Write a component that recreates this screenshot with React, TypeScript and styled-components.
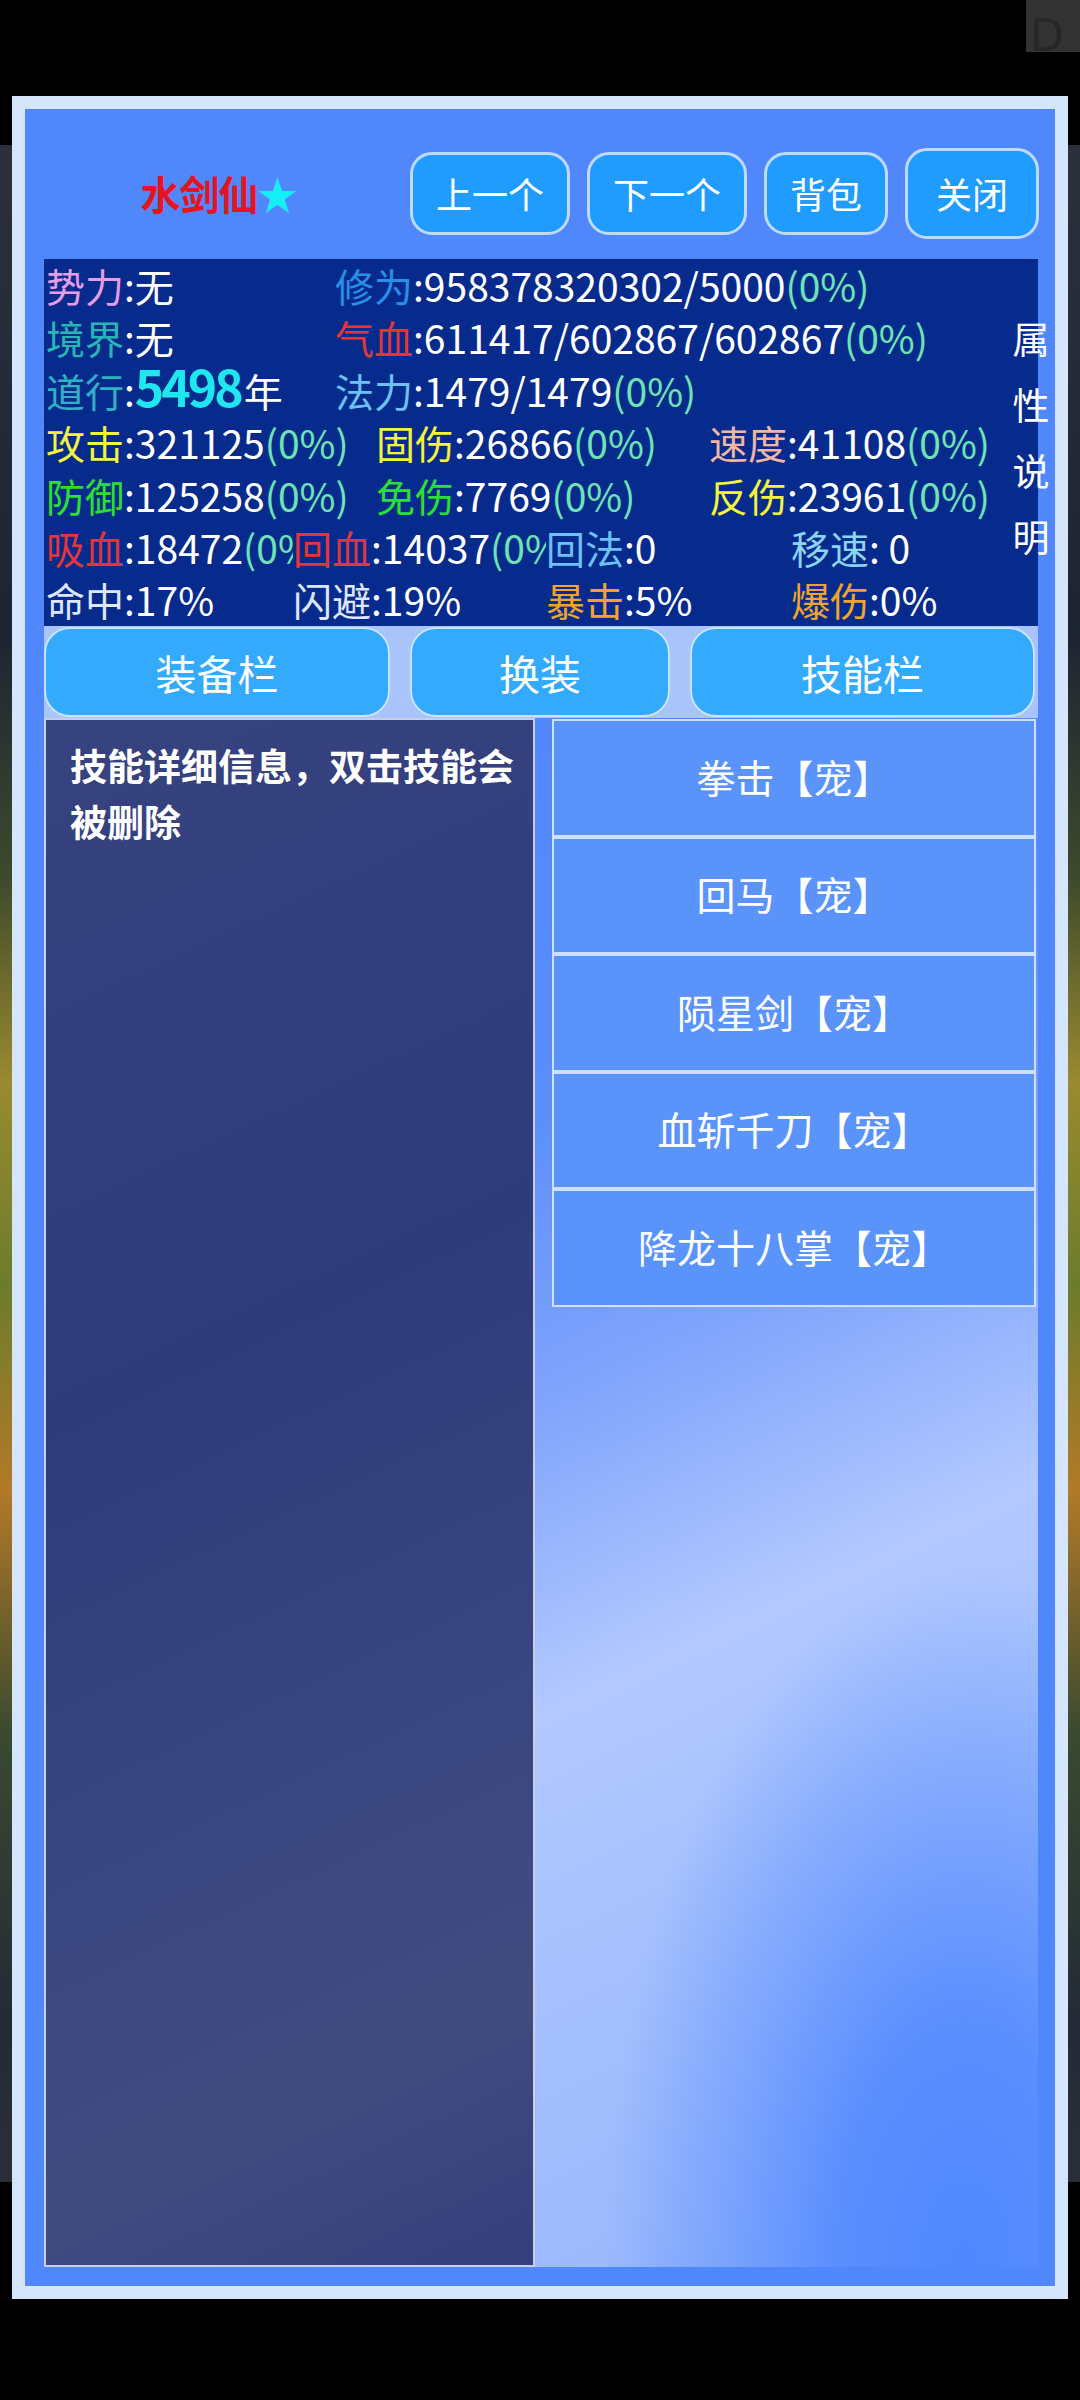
import React from 'react'
import styled, { createGlobalStyle } from 'styled-components'

const GlobalStyle = createGlobalStyle`
    html, body {
        margin: 0;
        padding: 0;
        background: #000;
    }
    * {
        box-sizing: border-box;
    }
`

const FONT = `"Noto Sans CJK SC", "Noto Sans", sans-serif`

const Screen = styled.div`
    width: 1080px;
    height: 2400px;
    overflow: hidden;
    font-family: ${FONT};
    /* game scene peeking out behind the dialog */
    background:
        linear-gradient(180deg, #2b303b 0%, #1d2433 24%, #3e4a2c 36%, #9a8a30 46%, #6c7c2c 56%, #b27a28 66%, #3a4a30 78%, #232a36 92%, #2a2e38 100%) 0 145px / 100% 2037px no-repeat,
        #000;
`

const TopStrip = styled.div`
    height: 96px;
    display: flex;
    justify-content: flex-end;
    align-items: flex-start;
`

const CornerKey = styled.div`
    width: 54px;
    height: 52px;
    background: #333;
    overflow: hidden;
    color: #272727;
    font-family: "DejaVu Sans", sans-serif;
    font-size: 44px;
    line-height: 1;
    padding: 14px 0 0 4px;
`

const Dialog = styled.div`
    width: 1056px;
    height: 2203px;
    margin: 0 12px;
    border: 13px solid #d5e5fb;
    background: #5087fb;
    padding: 0 17px 19px 19px;
    display: flex;
    flex-direction: column;
`

/* ---------- header ---------- */

const Header = styled.div`
    height: 150px;
    padding-top: 18px;
    display: flex;
    align-items: center;
    gap: 17px;
`

const Name = styled.div`
    flex: 0 0 349px;
    text-align: center;
    font-size: 40px;
    font-weight: 700;
    color: #e5141e;
    letter-spacing: -1px;
    white-space: nowrap;
`

const Star = styled.span`
    color: #14eef5;
`

const HeadButton = styled.button<{ $big?: boolean }>`
    flex: 0 0 auto;
    white-space: nowrap;
    height: ${p => (p.$big ? 91 : 83)}px;
    padding: 0 ${p => (p.$big ? 28 : 23)}px;
    border: 3px solid #bfd9ff;
    border-radius: 22px;
    background: #1f9cfd;
    color: #fff;
    font-family: ${FONT};
    font-size: 36px;
    line-height: 1;
`

/* ---------- stats ---------- */

const StatsBox = styled.div`
    position: relative;
    height: 367px;
    background: #072b8c;
    padding-left: 2px;
    font-size: 39px;
    line-height: 52.4px;
    color: #fff;
`

const StatRow = styled.div`
    display: flex;
    height: 52.4px;
`

const Cell = styled.div<{ $w?: number }>`
    flex: ${p => (p.$w ? `0 0 ${p.$w}px` : '1 1 0')};
    white-space: nowrap;
    overflow: hidden;
`

const Label = styled.span<{ $c: string }>`
    color: ${p => p.$c};
`

const Pct = styled.span`
    color: #6ee4b4;
`

const BigNum = styled.span`
    color: #1ee8ee;
    font-size: 50px;
    font-weight: 700;
    line-height: 38px;
    letter-spacing: -3px;
    margin-right: 3px;
`

const SideNote = styled.div`
    position: absolute;
    right: -12px;
    top: 46px;
    width: 38px;
    font-size: 37px;
    line-height: 66px;
    color: #fff;
    text-align: center;
`

/* ---------- tabs ---------- */

const TabBar = styled.div`
    height: 92px;
    padding: 1px 0;
    background: #a9c3fb;
    display: flex;
    gap: 20px;
`

const Tab = styled.button<{ $w: number }>`
    flex: 0 0 ${p => p.$w}px;
    border: 2px solid #c9e2ff;
    border-radius: 26px;
    background: #34aafc;
    color: #fff;
    font-family: ${FONT};
    font-size: 41px;
    line-height: 1;
`

/* ---------- skills ---------- */

const Content = styled.div`
    flex: 1;
    display: flex;
`

const DetailPanel = styled.div`
    flex: 0 0 491px;
    border: 2px solid #c8cee6;
    background: linear-gradient(155deg, #37437f 0%, #2f3c7b 40%, #3b4780 70%, #414b80 85%, #343f7c 100%);
    padding: 17px 12px 17px 24px;
    color: #fff;
    font-size: 37px;
    font-weight: 700;
    line-height: 56px;
`

const SkillList = styled.div`
    flex: 1;
    padding: 1px 2px 0 17px;
    display: flex;
    flex-direction: column;
    background:
        radial-gradient(360px 700px at 430px 100%, #4f87ff 0%, rgba(79, 135, 255, 0.85) 35%, rgba(79, 135, 255, 0) 100%),
        linear-gradient(155deg, #5087fb 0%, #5b8efb 22%, #7ea3fc 38%, #b3c9ff 56%, #a6c1fd 70%, #96b5fc 100%);
`

const SkillItem = styled.div`
    flex: 0 0 117.5px;
    border: 2px solid #cfe0ff;
    background: #5a94fb;
    color: #fff;
    font-size: 39px;
    display: flex;
    align-items: center;
    justify-content: center;
    padding-bottom: 4px;
`

const skills = ['拳击【宠】', '回马【宠】', '陨星剑【宠】', '血斩千刀【宠】', '降龙十八掌【宠】']

const C = {
    pink: '#e69de6',
    teal: '#29b5b5',
    teal2: '#2fb2c6',
    blue: '#2790e6',
    red: '#e2363a',
    sky: '#6cc2f2',
    yellow: '#f4f43a',
    peach: '#f2b6a6',
    green: '#2ee02e',
    cyan: '#8ad6f4',
    pale: '#dfe6ff',
    orange: '#f0a52a',
}

export default function App() {
    return (
        <Screen>
            <GlobalStyle />
            <TopStrip>
                <CornerKey>D</CornerKey>
            </TopStrip>
            <Dialog>
                <Header>
                    <Name>
                        水剑仙<Star>★</Star>
                    </Name>
                    <HeadButton>上一个</HeadButton>
                    <HeadButton>下一个</HeadButton>
                    <HeadButton>背包</HeadButton>
                    <HeadButton $big>关闭</HeadButton>
                </Header>

                <StatsBox>
                    <StatRow>
                        <Cell $w={289}><Label $c={C.pink}>势力</Label>:无</Cell>
                        <Cell>
                            <Label $c={C.blue}>修为</Label>:958378320302/5000<Pct>(0%)</Pct>
                        </Cell>
                    </StatRow>
                    <StatRow>
                        <Cell $w={289}><Label $c={C.teal}>境界</Label>:无</Cell>
                        <Cell>
                            <Label $c={C.red}>气血</Label>:611417/602867/602867<Pct>(0%)</Pct>
                        </Cell>
                    </StatRow>
                    <StatRow>
                        <Cell $w={289}><Label $c={C.teal2}>道行</Label>:<BigNum>5498</BigNum>年</Cell>
                        <Cell>
                            <Label $c={C.sky}>法力</Label>:1479/1479<Pct>(0%)</Pct>
                        </Cell>
                    </StatRow>
                    <StatRow>
                        <Cell $w={330}><Label $c={C.yellow}>攻击</Label>:321125<Pct>(0%)</Pct></Cell>
                        <Cell $w={333}><Label $c={C.yellow}>固伤</Label>:26866<Pct>(0%)</Pct></Cell>
                        <Cell><Label $c={C.peach}>速度</Label>:41108<Pct>(0%)</Pct></Cell>
                    </StatRow>
                    <StatRow>
                        <Cell $w={330}><Label $c={C.green}>防御</Label>:125258<Pct>(0%)</Pct></Cell>
                        <Cell $w={333}><Label $c={C.green}>免伤</Label>:7769<Pct>(0%)</Pct></Cell>
                        <Cell><Label $c={C.yellow}>反伤</Label>:23961<Pct>(0%)</Pct></Cell>
                    </StatRow>
                    <StatRow>
                        <Cell $w={247}><Label $c={C.red}>吸血</Label>:18472<Pct>(0%)</Pct></Cell>
                        <Cell $w={253}><Label $c={C.red}>回血</Label>:14037<Pct>(0%)</Pct></Cell>
                        <Cell $w={245}><Label $c={C.sky}>回法</Label>:0</Cell>
                        <Cell><Label $c={C.cyan}>移速</Label>: 0</Cell>
                    </StatRow>
                    <StatRow>
                        <Cell $w={247}><Label $c={C.pale}>命中</Label>:17%</Cell>
                        <Cell $w={253}><Label $c={C.pale}>闪避</Label>:19%</Cell>
                        <Cell $w={245}><Label $c={C.orange}>暴击</Label>:5%</Cell>
                        <Cell><Label $c={C.orange}>爆伤</Label>:0%</Cell>
                    </StatRow>
                    <SideNote>属性说明</SideNote>
                </StatsBox>

                <TabBar>
                    <Tab $w={346}>装备栏</Tab>
                    <Tab $w={260}>换装</Tab>
                    <Tab $w={345}>技能栏</Tab>
                </TabBar>

                <Content>
                    <DetailPanel>技能详细信息，双击技能会被删除</DetailPanel>
                    <SkillList>
                        {skills.map(s => (
                            <SkillItem key={s}>{s}</SkillItem>
                        ))}
                    </SkillList>
                </Content>
            </Dialog>
        </Screen>
    )
}
